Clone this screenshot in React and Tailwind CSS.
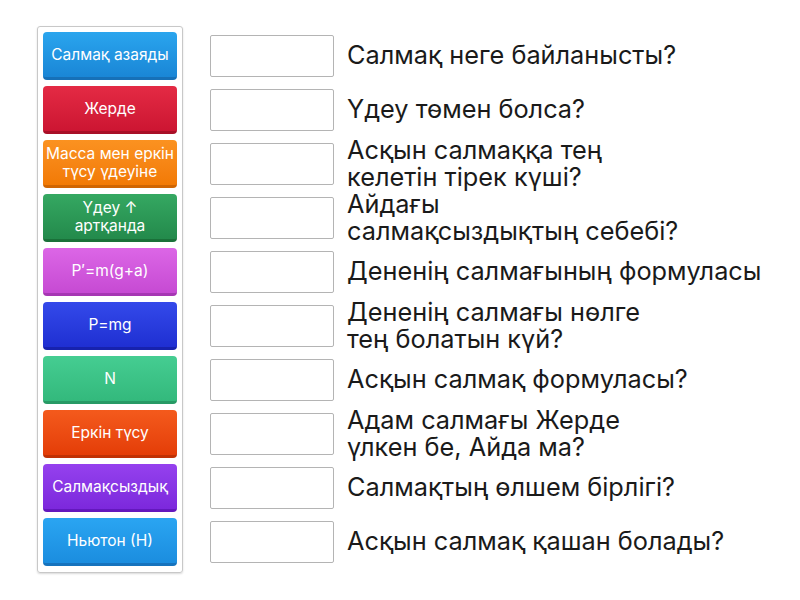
import React from 'react';

const answers = [
  { label: ['Салмақ азаяды'], from: 'from-[#2aa5ee]', to: 'to-[#1a86d6]', edge: 'border-[#1670b8]' },
  { label: ['Жерде'], from: 'from-[#e42a44]', to: 'to-[#cc1532]', edge: 'border-[#a80f27]' },
  { label: ['Масса мен еркін', 'түсу үдеуіне'], from: 'from-[#fb9220]', to: 'to-[#f27a05]', edge: 'border-[#d06502]' },
  { label: ['Үдеу ↑', 'артқанда'], from: 'from-[#35a862]', to: 'to-[#238a4b]', edge: 'border-[#1a7039]' },
  { label: ['P′=m(g+a)'], from: 'from-[#dc66e6]', to: 'to-[#c64ad3]', edge: 'border-[#a636b3]' },
  { label: ['P=mg'], from: 'from-[#3449ea]', to: 'to-[#1f2fd2]', edge: 'border-[#1722ae]' },
  { label: ['N'], from: 'from-[#45cd92]', to: 'to-[#33b97c]', edge: 'border-[#279a65]' },
  { label: ['Еркін түсу'], from: 'from-[#f45a1c]', to: 'to-[#e43d07]', edge: 'border-[#c03104]' },
  { label: ['Салмақсыздық'], from: 'from-[#9541ee]', to: 'to-[#7c28dc]', edge: 'border-[#6418bd]' },
  { label: ['Ньютон (Н)'], from: 'from-[#2aa5f2]', to: 'to-[#1b8ddf]', edge: 'border-[#1673bd]' },
];

// questions, two-line ones broken where the reference breaks them
const questions = [
  ['Салмақ неге байланысты?'],
  ['Үдеу төмен болса?'],
  ['Асқын салмаққа тең', 'келетін тірек күші?'],
  ['Айдағы', 'салмақсыздықтың себебі?'],
  ['Дененің салмағының формуласы'],
  ['Дененің салмағы нөлге', 'тең болатын күй?'],
  ['Асқын салмақ формуласы?'],
  ['Адам салмағы Жерде', 'үлкен бе, Айда ма?'],
  ['Салмақтың өлшем бірлігі?'],
  ['Асқын салмақ қашан болады?'],
];

const Lines = ({ parts }) => (
  <>
    {parts.map((p, i) => (
      <React.Fragment key={i}>
        {i > 0 && <br />}
        {p}
      </React.Fragment>
    ))}
  </>
);

const App = () => {
  return (
    <div className="w-[800px] h-[600px] bg-white flex pl-[37px] pt-[26px]" style={{ fontFamily: 'Inter, "Noto Sans", sans-serif' }}>
      <div className="w-[146px] h-[547px] border border-[#c8c8c8] rounded-[3px] p-[5px] flex flex-col gap-[6px] shadow-[0_1px_2px_rgba(0,0,0,0.15)]">
        {answers.map((a, i) => (
          <div
            key={i}
            className={`h-[48px] rounded-[4px] bg-gradient-to-b ${a.from} ${a.to} border-b-[3px] ${a.edge} flex items-center justify-center text-center text-white text-[15.5px] leading-[18px] whitespace-nowrap`}
          >
            <span>
              <Lines parts={a.label} />
            </span>
          </div>
        ))}
      </div>
      <div className="flex flex-col gap-[6px] ml-[27px] pt-[6px]">
        {questions.map((q, i) => (
          <div key={i} className="h-[48px] flex items-center">
            <div className="w-[124px] h-[42px] border border-[#b4b4b4] rounded-[2px] bg-white shrink-0" />
            <div className="ml-[13px] -mt-[3px] text-[25.3px] leading-[27px] text-[#1a1a1a] whitespace-nowrap">
              <Lines parts={q} />
            </div>
          </div>
        ))}
      </div>
    </div>
  );
};

export default App;
